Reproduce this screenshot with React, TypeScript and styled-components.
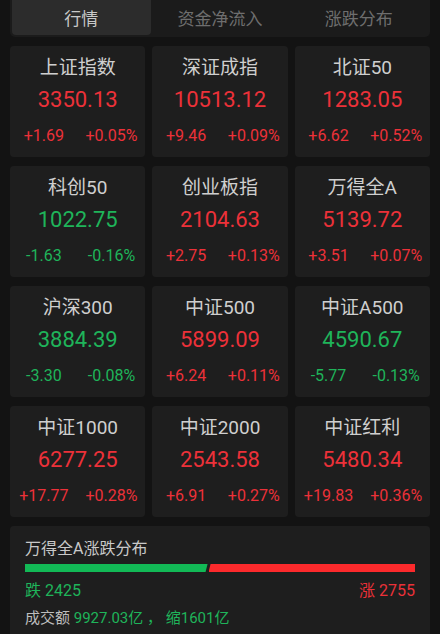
import React from 'react'
import styled, { createGlobalStyle } from 'styled-components'

type Quote = {
  name: string
  price: string
  change: string
  percent: string
}

const quotes: Quote[] = [
  { name: '上证指数', price: '3350.13', change: '+1.69', percent: '+0.05%' },
  { name: '深证成指', price: '10513.12', change: '+9.46', percent: '+0.09%' },
  { name: '北证50', price: '1283.05', change: '+6.62', percent: '+0.52%' },
  { name: '科创50', price: '1022.75', change: '-1.63', percent: '-0.16%' },
  { name: '创业板指', price: '2104.63', change: '+2.75', percent: '+0.13%' },
  { name: '万得全A', price: '5139.72', change: '+3.51', percent: '+0.07%' },
  { name: '沪深300', price: '3884.39', change: '-3.30', percent: '-0.08%' },
  { name: '中证500', price: '5899.09', change: '+6.24', percent: '+0.11%' },
  { name: '中证A500', price: '4590.67', change: '-5.77', percent: '-0.13%' },
  { name: '中证1000', price: '6277.25', change: '+17.77', percent: '+0.28%' },
  { name: '中证2000', price: '2543.58', change: '+6.91', percent: '+0.27%' },
  { name: '中证红利', price: '5480.34', change: '+19.83', percent: '+0.36%' },
]

const tabs = ['行情', '资金净流入', '涨跌分布']

const RED = '#ec3139'
const GREEN = '#1fb45a'

const fall = 2425
const rise = 2755

const GlobalStyle = createGlobalStyle`
  body {
    margin: 0;
    background: #131313;
    font-family: Roboto, "Noto Sans CJK SC", sans-serif;
  }
`

const App: React.FC = () => {
  const fallPct = (fall / (fall + rise)) * 100

  return (
    <>
      <GlobalStyle />
      <Page>
        <TabBar>
          {tabs.map((t, i) => (
            <Tab key={t} active={i === 0}>
              {t}
            </Tab>
          ))}
        </TabBar>

        <Grid>
          {quotes.map((q) => {
            const up = !q.change.startsWith('-')
            return (
              <Card key={q.name}>
                <Name>{q.name}</Name>
                <Price up={up}>{q.price}</Price>
                <ChangeRow up={up}>
                  <span>{q.change}</span>
                  <span>{q.percent}</span>
                </ChangeRow>
              </Card>
            )
          })}
        </Grid>

        <Breadth>
          <BreadthTitle>万得全A涨跌分布</BreadthTitle>
          <Bar>
            <FallSeg style={{ width: `${fallPct}%` }} />
            <RiseSeg />
          </Bar>
          <CountRow>
            <Count up={false}>跌 {fall}</Count>
            <Count up>涨 {rise}</Count>
          </CountRow>
          <Turnover>
            成交额 <em>9927.03亿 ， 缩1601亿</em>
          </Turnover>
        </Breadth>
      </Page>
    </>
  )
}

const Page = styled.div`
  width: 440px;
  height: 634px;
  overflow: hidden;
  padding: 0 10px;
  box-sizing: border-box;
`

const TabBar = styled.div`
  display: grid;
  grid-template-columns: repeat(3, 1fr);
  height: 37px;
  padding: 0 2px 2px;
  box-sizing: border-box;
  background: #1b1b1b;
  border-radius: 0 0 5px 5px;
`

const Tab = styled.div<{ active?: boolean }>`
  display: flex;
  align-items: center;
  justify-content: center;
  font-size: 17px;
  color: ${(p) => (p.active ? '#c9c9c9' : '#6e6e6e')};
  background: ${(p) => (p.active ? '#2c2c2c' : 'transparent')};
  border-radius: 0 0 4px 4px;
`

const Grid = styled.div`
  display: grid;
  grid-template-columns: repeat(3, 1fr);
  column-gap: 7px;
  row-gap: 9px;
  margin-top: 9px;
`

const Card = styled.div`
  height: 111px;
  box-sizing: border-box;
  padding-top: 10px;
  background: #1e1e1e;
  border-radius: 4px;
  display: flex;
  flex-direction: column;
  align-items: center;
`

const Name = styled.div`
  font-size: 19px;
  line-height: 24px;
  color: #cfcfcf;
`

const Price = styled.div<{ up: boolean }>`
  margin-top: 6px;
  font-size: 22px;
  line-height: 28px;
  color: ${(p) => (p.up ? RED : GREEN)};
`

const ChangeRow = styled.div<{ up: boolean }>`
  margin-top: 10px;
  width: 100%;
  display: flex;
  font-size: 16px;
  line-height: 24px;
  color: ${(p) => (p.up ? RED : GREEN)};

  span {
    flex: 1;
    text-align: center;
  }
`

const Breadth = styled.div`
  margin-top: 9px;
  height: 120px;
  box-sizing: border-box;
  padding: 12px 15px 0;
  background: #1e1e1e;
  border-radius: 4px 4px 0 0;
`

const BreadthTitle = styled.div`
  font-size: 16px;
  line-height: 22px;
  color: #c9c9c9;
`

const Bar = styled.div`
  display: flex;
  height: 8px;
  margin-top: 4px;
`

const FallSeg = styled.div`
  background: #12b956;
  clip-path: polygon(0 0, 100% 0, calc(100% - 2px) 100%, 0 100%);
`

const RiseSeg = styled.div`
  flex: 1;
  margin-left: 1px;
  background: #fc2a2c;
  clip-path: polygon(2px 0, 100% 0, 100% 100%, 0 100%);
`

const CountRow = styled.div`
  display: flex;
  justify-content: space-between;
  margin-top: 7px;
  font-size: 16px;
  line-height: 24px;
`

const Count = styled.span<{ up: boolean }>`
  color: ${(p) => (p.up ? RED : GREEN)};
`

const Turnover = styled.div`
  margin-top: 4px;
  font-size: 15px;
  line-height: 22px;
  color: #bdbdbd;

  em {
    font-style: normal;
    color: ${GREEN};
  }
`

export default App
